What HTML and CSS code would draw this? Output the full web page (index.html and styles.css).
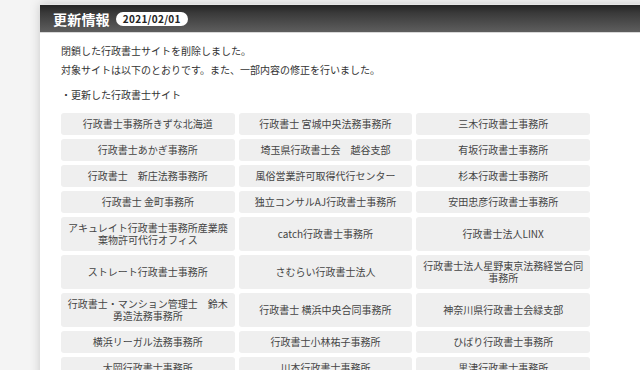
FILE: index.html
```html
<!DOCTYPE html>
<html lang="ja">
<head>
<meta charset="utf-8">
<link rel="stylesheet" href="styles.css">
</head>
<body>
<div class="card">
  <div class="head">
    <h2 class="title">更新情報</h2>
    <span class="date">2021/02/01</span>
  </div>
  <div class="body">
    <p class="lead">閉鎖した行政書士サイトを削除しました。<br>対象サイトは以下のとおりです。また、一部内容の修正を行いました。</p>
    <p class="sub">・更新した行政書士サイト</p>
    <div class="grid">
      <div class="item">行政書士事務所きずな北海道</div>
      <div class="item">行政書士 宮城中央法務事務所</div>
      <div class="item">三木行政書士事務所</div>
      <div class="item">行政書士あかぎ事務所</div>
      <div class="item">埼玉県行政書士会　越谷支部</div>
      <div class="item">有坂行政書士事務所</div>
      <div class="item">行政書士　新庄法務事務所</div>
      <div class="item">風俗営業許可取得代行センター</div>
      <div class="item">杉本行政書士事務所</div>
      <div class="item">行政書士 金町事務所</div>
      <div class="item">独立コンサルAJ行政書士事務所</div>
      <div class="item">安田忠彦行政書士事務所</div>
      <div class="item">アキュレイト行政書士事務所産業廃棄物許可代行オフィス</div>
      <div class="item">catch行政書士事務所</div>
      <div class="item">行政書士法人LINX</div>
      <div class="item">ストレート行政書士事務所</div>
      <div class="item">さむらい行政書士法人</div>
      <div class="item">行政書士法人星野東京法務経営合同事務所</div>
      <div class="item">行政書士・マンション管理士　鈴木勇造法務事務所</div>
      <div class="item">行政書士 横浜中央合同事務所</div>
      <div class="item">神奈川県行政書士会緑支部</div>
      <div class="item">横浜リーガル法務事務所</div>
      <div class="item">行政書士小林祐子事務所</div>
      <div class="item">ひばり行政書士事務所</div>
      <div class="item">大岡行政書士事務所</div>
      <div class="item">川本行政書士事務所</div>
      <div class="item">黒津行政書士事務所</div>
    </div>
  </div>
</div>
</body>
</html>
```
FILE: styles.css
```css
html, body {
  margin: 0;
  padding: 0;
}
body {
  background: #f4f4f4;
  font-family: "Noto Sans CJK JP", "Noto Sans", sans-serif;
  overflow: hidden;
  width: 640px;
  height: 370px;
}
.card {
  margin: 4px 0 0 40px;
  width: 640px;
  background: #fff;
  box-shadow: 0 0 10px rgba(0, 0, 0, 0.18);
  border-top: 1px solid #e6e6e6;
}
.head {
  height: 28px;
  display: flex;
  align-items: center;
  padding-left: 13px;
  background: linear-gradient(#242424, #3a3a3a 30%, #5e5e5e);
  border-bottom: 1px solid #d8d8d8;
  box-sizing: border-box;
}
.title {
  margin: 0;
  font-size: 14px;
  font-weight: bold;
  color: #fff;
  line-height: 1;
  letter-spacing: 0.2px;
}
.date {
  margin-left: 6px;
  background: #fff;
  color: #222;
  font-size: 10px;
  font-weight: bold;
  line-height: 14px;
  padding: 0 7px;
  border-radius: 8px;
  letter-spacing: 0.3px;
}
.body {
  padding: 8px 21px 20px 21px;
  width: 529px;
}
.lead, .sub {
  margin: 0;
  font-size: 10px;
  line-height: 19px;
  color: #333;
}
.sub {
  margin-top: 6px;
}
.grid {
  margin-top: 9px;
  display: grid;
  grid-template-columns: repeat(3, 1fr);
  gap: 4px;
}
.item {
  background: #efefef;
  border-radius: 3px;
  font-size: 10px;
  line-height: 12px;
  color: #444;
  padding: 5px 5px;
  display: flex;
  align-items: center;
  justify-content: center;
  text-align: center;
  min-height: 12px;
}
```
